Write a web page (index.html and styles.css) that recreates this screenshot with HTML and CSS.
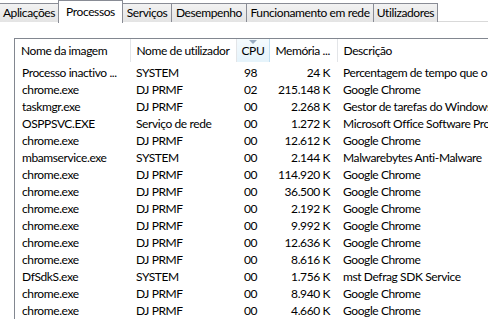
FILE: index.html
```html
<!DOCTYPE html>
<html lang="pt">
<head>
  <meta charset="UTF-8" />
  <title>Gestor de tarefas do Windows</title>
  <link rel="stylesheet" href="styles.css">
</head>
<body>
  <!-- Separadores -->
  <div class="tabs">
    <div class="tab t-apps">Aplicações</div>
    <div class="tab t-proc active">Processos</div>
    <div class="tab t-serv">Serviços</div>
    <div class="tab t-perf">Desempenho</div>
    <div class="tab t-net">Funcionamento em rede</div>
    <div class="tab t-users">Utilizadores</div>
  </div>

  <!-- Lista de processos -->
  <div class="list">
    <table>
      <colgroup>
        <col class="c-name"><col class="c-user"><col class="c-cpu"><col class="c-mem"><col class="c-desc">
      </colgroup>
      <thead>
        <tr>
          <th>Nome da imagem</th>
          <th>Nome de utilizador</th>
          <th class="sorted"><span class="arrow"></span>CPU</th>
          <th>Memória ...</th>
          <th>Descrição</th>
        </tr>
      </thead>
      <tbody>
        <tr><td>Processo inactivo ...</td><td>SYSTEM</td><td class="cpu">98</td><td class="mem">24 K</td><td>Percentagem de tempo que o processador está inactivo</td></tr>
        <tr><td>chrome.exe</td><td>DJ PRMF</td><td class="cpu">02</td><td class="mem">215.148 K</td><td>Google Chrome</td></tr>
        <tr><td>taskmgr.exe</td><td>DJ PRMF</td><td class="cpu">00</td><td class="mem">2.268 K</td><td>Gestor de tarefas do Windows</td></tr>
        <tr><td>OSPPSVC.EXE</td><td>Serviço de rede</td><td class="cpu">00</td><td class="mem">1.272 K</td><td>Microsoft Office Software Protection Platform Service</td></tr>
        <tr><td>chrome.exe</td><td>DJ PRMF</td><td class="cpu">00</td><td class="mem">12.612 K</td><td>Google Chrome</td></tr>
        <tr><td>mbamservice.exe</td><td>SYSTEM</td><td class="cpu">00</td><td class="mem">2.144 K</td><td>Malwarebytes Anti-Malware</td></tr>
        <tr><td>chrome.exe</td><td>DJ PRMF</td><td class="cpu">00</td><td class="mem">114.920 K</td><td>Google Chrome</td></tr>
        <tr><td>chrome.exe</td><td>DJ PRMF</td><td class="cpu">00</td><td class="mem">36.500 K</td><td>Google Chrome</td></tr>
        <tr><td>chrome.exe</td><td>DJ PRMF</td><td class="cpu">00</td><td class="mem">2.192 K</td><td>Google Chrome</td></tr>
        <tr><td>chrome.exe</td><td>DJ PRMF</td><td class="cpu">00</td><td class="mem">9.992 K</td><td>Google Chrome</td></tr>
        <tr><td>chrome.exe</td><td>DJ PRMF</td><td class="cpu">00</td><td class="mem">12.636 K</td><td>Google Chrome</td></tr>
        <tr><td>chrome.exe</td><td>DJ PRMF</td><td class="cpu">00</td><td class="mem">8.616 K</td><td>Google Chrome</td></tr>
        <tr><td>DfSdkS.exe</td><td>SYSTEM</td><td class="cpu">00</td><td class="mem">1.756 K</td><td>mst Defrag SDK Service</td></tr>
        <tr><td>chrome.exe</td><td>DJ PRMF</td><td class="cpu">00</td><td class="mem">8.940 K</td><td>Google Chrome</td></tr>
        <tr><td>chrome.exe</td><td>DJ PRMF</td><td class="cpu">00</td><td class="mem">4.660 K</td><td>Google Chrome</td></tr>
      </tbody>
    </table>
  </div>
</body>
</html>
```

FILE: styles.css
```css
html, body { margin: 0; padding: 0; }
body {
  width: 488px;
  height: 320px;
  overflow: hidden;
  background: #fff;
  color: #000;
  font-family: Lato, "Open Sans", sans-serif;
  font-size: 12px;
  letter-spacing: -0.4px;
}

/* Separadores */
.tabs {
  display: flex;
  height: 22px;
  border-bottom: 1px solid #d9d9d9;
  box-sizing: border-box;
}
.tab {
  margin-top: 3px;
  height: 19px;
  line-height: 18px;
  border: 1px solid #898c95;
  border-bottom: none;
  border-left: none;
  background: linear-gradient(#f2f2f2, #e4e4e4);
  box-sizing: border-box;
  text-align: center;
  white-space: nowrap;
}
.t-apps { width: 59px; }
.t-proc { width: 64px; }
.t-serv { width: 49px; }
.t-perf { width: 75px; }
.t-net { width: 127px; }
.t-users { width: 64px; }

.tab.active {
  position: relative;
  margin-top: 0;
  margin-left: -1px;
  width: 65px;
  height: 23px;
  line-height: 21px;
  border-left: 1px solid #898c95;
  background: #fff;
  z-index: 1;
}

/* Lista */
.list {
  margin-top: 16px;
  margin-left: 14px;
  border-top: 1px solid #828790;
  border-left: 1px solid #828790;
  overflow: hidden;
}
table {
  border-collapse: collapse;
  table-layout: fixed;
  width: 560px;
}
.c-name { width: 115px; }
.c-user { width: 106px; }
.c-cpu { width: 33px; }
.c-mem { width: 68px; }
.c-desc { width: 238px; }

th {
  height: 23px;
  padding: 0 0 0 6px;
  font-weight: normal;
  text-align: left;
  border-right: 1px solid #e3e5e8;
  white-space: nowrap;
  overflow: hidden;
}
th.sorted {
  position: relative;
  padding-left: 5px;
  background: linear-gradient(#f4fafd, #e5f3fb);
  border-left: 1px solid #c1dff0;
  border-right: 1px solid #c1dff0;
}
.arrow {
  position: absolute;
  top: 1px;
  left: 12px;
  border-left: 4px solid transparent;
  border-right: 4px solid transparent;
  border-top: 4px solid #98abc2;
}

tbody tr:first-child td { padding-top: 2px; }
td {
  height: 17px;
  padding: 0 0 0 6px;
  white-space: nowrap;
  overflow: hidden;
  line-height: 17px;
}
td:first-child { padding-left: 7px; }
td.cpu { padding-left: 8px; }
td.mem { text-align: right; padding-right: 7px; }
```
